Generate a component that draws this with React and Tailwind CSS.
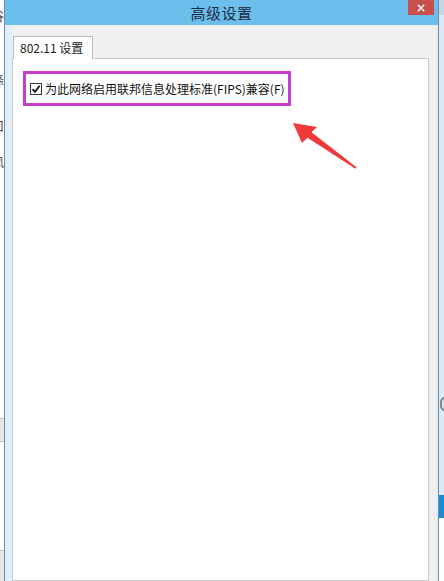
import React from 'react'

const FONT = { fontFamily: '"Microsoft YaHei", "Noto Sans CJK SC", "Noto Sans", sans-serif' }

function CheckBox() {
  return (
    <div className="w-[12px] h-[12px] border border-[#333] bg-white flex items-center justify-center shrink-0">
      <svg viewBox="0 0 10 10" className="w-[10px] h-[10px]">
        <path d="M1.5 5.2 L4 7.8 L8.6 1.8" fill="none" stroke="#111" strokeWidth="1.8" />
      </svg>
    </div>
  )
}

export default function App() {
  return (
    <div className="relative w-[444px] h-[581px] overflow-hidden bg-white flex" style={FONT}>
      {/* window behind, left edge */}
      <div className="w-[4px] shrink-0 flex flex-col overflow-hidden bg-white text-[12px] text-[#444] leading-none">
        <span className="-ml-[8px] mt-[10px]">谷</span>
        <span className="-ml-[8px] mt-[52px]">涤</span>
        <span className="-ml-[8px] mt-[34px]">口</span>
        <span className="-ml-[8px] mt-[24px]">凤</span>
        <div className="mt-[250px] h-[30px] bg-[#e6e6e6] border-y border-[#c8c8c8]" />
        <div className="mt-[108px] h-[40px] bg-[#e6e6e6] border-t border-[#c8c8c8]" />
      </div>

      {/* dialog */}
      <div className="w-[435px] shrink-0 flex flex-col border-x border-[#6f8daa]">
        <div className="h-[25px] bg-[#6cbfed] grid grid-cols-[1fr_auto_1fr]">
          <div />
          <div className="text-[15px] text-[#1c2c40] leading-[25px] tracking-[0.5px]">高级设置</div>
          <div className="flex justify-end pr-[4px]">
            <div className="w-[26px] h-[15px] bg-[#c9504c] flex items-center justify-center">
              <svg viewBox="0 0 10 10" className="w-[8px] h-[8px]">
                <path d="M1 1 L9 9 M9 1 L1 9" stroke="#fff" strokeWidth="1.8" />
              </svg>
            </div>
          </div>
        </div>

        <div className="flex-1 flex">
          <div className="w-[7px] bg-[#e3edf8]" />
          <div className="flex-1 bg-[#f0f0f0] flex flex-col pt-[11px] pr-[7px]">
            <div className="flex pl-[1px]">
              <div className="relative z-10 -mb-px w-[80px] h-[23px] bg-white border border-b-0 border-[#b9b9b9] text-[12px] text-[#222] pl-[6px] leading-[21px]">
                802.11 设置
              </div>
            </div>
            <div className="flex-1 bg-white border border-[#c9c9c9] pt-[12px] pl-[10px]">
              <div className="w-[268px] h-[35px] border-[3px] border-[#c63dcf] flex items-center gap-[3px] pl-[4px]">
                <CheckBox />
                <span className="text-[12px] text-[#111] leading-none">为此网络启用联邦信息处理标准(FIPS)兼容(F)</span>
              </div>
            </div>
          </div>
          <div className="w-[2px] bg-[#e3edf8]" />
        </div>
      </div>

      {/* window behind, right edge */}
      <div className="flex-1 flex flex-col bg-[#dfe9f4]">
        <div className="h-[15px] bg-[#c6d6e6]" />
        <div className="mt-[382px] ml-[1px] w-[10px] h-[14px] rounded-full border-2 border-[#888]" />
        <div className="mt-[84px] h-[23px] bg-[#1a8dcf]" />
        <div className="flex-1 bg-white" />
      </div>

      {/* red annotation arrow */}
      <svg viewBox="0 0 444 581" className="absolute inset-0 w-full h-full pointer-events-none">
        <polygon
          points="293,123 317,127 311.5,132.2 356.5,167.3 355.5,168.7 307.5,137.8 302,143"
          fill="#ef3a3a"
        />
      </svg>
    </div>
  )
}
